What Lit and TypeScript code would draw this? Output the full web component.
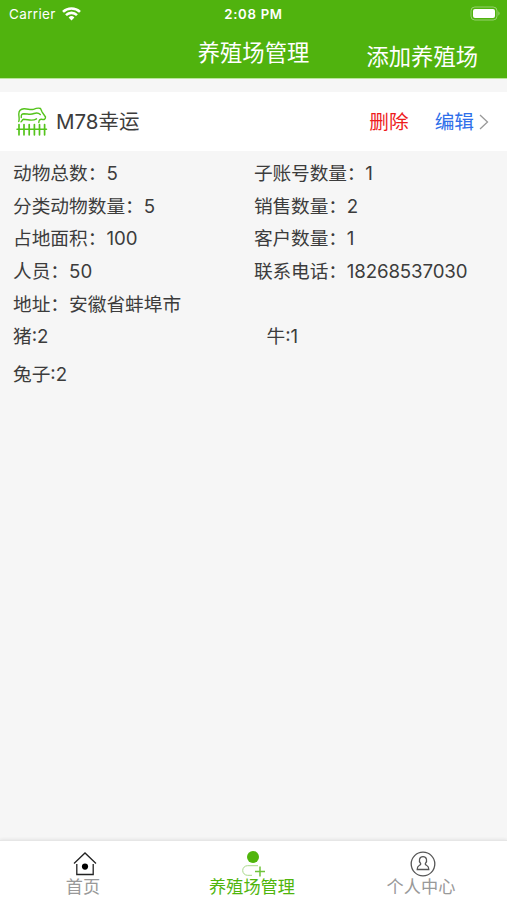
import { LitElement, html, css, svg } from "lit";
import { customElement } from "lit/decorators.js";

const wifi = svg`<svg width="19" height="14" viewBox="0 0 19 14" fill="#fff">
  <path d="M9.5 13.6 6.6 10.5a4.2 4.2 0 0 1 5.8 0z"/>
  <path d="M4 8.1a8 8 0 0 1 11 0" fill="none" stroke="#fff" stroke-width="2.6"/>
  <path d="M1 4.9a12.3 12.3 0 0 1 17 0" fill="none" stroke="#fff" stroke-width="2.6"/>
</svg>`;

const battery = svg`<svg width="31" height="15" viewBox="0 0 31 15">
  <rect x="1" y="1" width="26" height="13" rx="3.8" fill="none" stroke="#fff" stroke-opacity=".4"/>
  <rect x="3" y="3" width="22" height="9" rx="2" fill="#fff"/>
  <path d="M28.5 5.3q2 2.2 0 4.4z" fill="#fff" fill-opacity=".5"/>
</svg>`;

const farm = svg`<svg width="32" height="30" viewBox="0 0 32 30" fill="none" stroke="#55c41c" stroke-width="1.4" stroke-linejoin="round" stroke-linecap="round">
  <path d="M2.7 14.5C3.8 12.5 2.8 10 2.8 7C2.8 3.500 4.500 2 8 1.800C12 1.600 14 3.300 17.500 2.300C20 1.300 22.500 .8 24.500 1.500L26 4.800L29.500 10C29.500 12.300 28 13 26 12.300C23.500 12 23 13.500 22.800 15.500"/>
  <path d="M5.300 10.500C5 7.500 6 6.700 8 6.700C12 6.800 14.500 8 18 6.500C20.500 5.500 22.500 5.700 24.300 7.500M5 14.800C6.500 14 6 12.300 7.500 12.200C12 12.200 16 14.800 20.500 11.800"/>
  <path d="M1 22.300H30.500" stroke-width="1.500"/>
  <path d="M3 17.500V27.800M8 17.500V27.800M13.200 17.500V27.800M18.400 17.500V27.800M23.500 17.500V27.800M28.600 17.500V27.800" stroke-width="1.700"/>
</svg>`;

const home = svg`<svg width="26" height="26" viewBox="0 0 26 26" fill="none" stroke="#222" stroke-width="1.3">
  <path d="M2 12.5 13 2l11 10.5"/>
  <path d="M4.8 13v10.5h16.4V13"/>
  <circle cx="13" cy="15.6" r="3.1" fill="#000" stroke="none"/>
</svg>`;

const manage = svg`<svg width="26" height="28" viewBox="0 0 26 28" fill="none">
  <circle cx="13" cy="8" r="6" fill="#50b50c"/>
  <path d="M18 16.7H7.5a4.7 4.7 0 0 0 0 9.6H12" stroke="#a9d98a" stroke-width="1"/>
  <path d="M20 17.5v10M15 22.5h10" stroke="#6fc43a" stroke-width="1.5"/>
</svg>`;

const person = svg`<svg width="26" height="26" viewBox="0 0 26 26" fill="none" stroke="#555" stroke-width="1.3">
  <circle cx="13" cy="13" r="11.8"/>
  <path d="M10.7 12.6C8.2 9.8 9.4 5.7 13 5.7s4.8 4.1 2.3 6.9c-.3 1 .3 1.4 1.5 1.9 1.6.7 2 1.8 2 4H7.2c0-2.2.4-3.3 2-4 1.2-.5 1.8-.9 1.5-1.9z"/>
</svg>`;

const rows = [
  ["动物总数：5", "子账号数量：1"],
  ["分类动物数量：5", "销售数量：2"],
  ["占地面积：100", "客户数量：1"],
  ["人员：50", "联系电话：18268537030"],
  ["地址：安徽省蚌埠市", ""],
];

@customElement("app-root")
export class AppRoot extends LitElement {
  static styles = css`
    :host {
      display: flex;
      flex-direction: column;
      height: 900px;
      box-sizing: border-box;
      background: #f6f6f6;
      color: #3c3c3c;
      font-family: Inter, "Noto Sans CJK SC", sans-serif;
      white-space: nowrap;
    }
    svg { display: block; flex: none; }
    .top { height: 79px; background: #50b30e; color: #fff; border-bottom: 1px solid #b9e59b; box-sizing: border-box; }
    .status { display: grid; grid-template-columns: 1fr auto 1fr; align-items: center; height: 27px; padding: 0 6px 0 9px; font-size: 13.5px; }
    .carrier { display: flex; align-items: center; gap: 6px; letter-spacing: 0.35px; }
    .time { font-weight: 600; font-size: 13.2px; letter-spacing: 0.7px; margin-right: 3px; }
    .battery { justify-self: end; }
    .nav { display: grid; grid-template-columns: 1fr auto 1fr; font-size: 22.3px; line-height: 32px; padding-top: 10px; }
    .nav .title { grid-column: 2; }
    .nav .add { justify-self: end; padding: 4px 29px 0 0; }
    .head { display: flex; align-items: center; margin-top: 13px; height: 59px; box-sizing: border-box; padding: 0 18px 0 16px; background: #fff; }
    .name { font-size: 20.5px; line-height: 30px; margin-left: 8px; padding-top: 1px; flex: 1; }
    .del { color: #ee1c1c; font-size: 19.7px; margin-right: 26px; padding-bottom: 2px; }
    .edit { color: #2f6fea; font-size: 19.7px; margin-right: 5px; padding-bottom: 2px; }
    .info { padding: 7px 13px 0; font-size: 18.7px; }
    .row { display: grid; grid-template-columns: 241px 1fr; height: 32.7px; line-height: 32.7px; }
    .row span + span { letter-spacing: -0.13px; }
    .animals { display: grid; grid-template-columns: 253.5px 1fr; grid-auto-rows: 37.5px; line-height: 32px; }
    .tabs { display: grid; grid-template-columns: repeat(3, 1fr); height: 59px; margin-top: auto; background: #fff; border-top: 1px solid #e6e6e6; box-shadow: 0 -1px 3px #00000012; }
    .tab { display: flex; flex-direction: column; align-items: center; font-size: 17.2px; color: #999; }
    .icon { height: 36px; display: flex; align-items: flex-end; }
    .label { line-height: 20px; margin-right: 3px; }
    .active { color: #50b50c; }
    .active .icon { margin-right: 2px; }
  `;

  render() {
    return html`
      <div class="top">
        <div class="status">
          <div class="carrier"><span>Carrier</span>${wifi}</div>
          <span class="time">2:08 PM</span>
          <div class="battery">${battery}</div>
        </div>
        <div class="nav"><span class="title">养殖场管理</span><span class="add">添加养殖场</span></div>
      </div>
      <div class="head">
        ${farm}
        <span class="name">M78幸运</span>
        <span class="del">删除</span>
        <span class="edit">编辑</span>
        <svg width="10" height="16" viewBox="0 0 10 16" fill="none" stroke="#999" stroke-width="1.3"><path d="M1 1l7.5 7L1 15"/></svg>
      </div>
      <div class="info">
        ${rows.map(([a, b]) => html`<div class="row"><span>${a}</span><span>${b}</span></div>`)}
        <div class="animals"><span>猪:2</span><span>牛:1</span><span>兔子:2</span></div>
      </div>
      <div class="tabs">
        <div class="tab"><div class="icon">${home}</div><span class="label">首页</span></div>
        <div class="tab active"><div class="icon">${manage}</div><span class="label">养殖场管理</span></div>
        <div class="tab"><div class="icon">${person}</div><span class="label">个人中心</span></div>
      </div>
    `;
  }
}
